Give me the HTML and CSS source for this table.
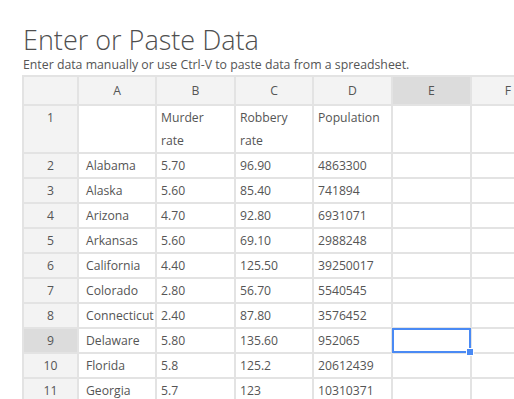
FILE: index.html
```html
<!DOCTYPE html>
<html lang="en">
  <head>
    <meta charset="UTF-8" />
    <meta name="viewport" content="width=device-width, initial-scale=1.0" />
    <title>Enter or Paste Data</title>
    <link rel="stylesheet" href="styles.css">
  </head>
  <body>
    <div id="page">
      <h1 class="title">Enter or Paste Data</h1>
      <p class="subtitle">Enter data manually or use Ctrl-V to paste data from a spreadsheet.</p>
      <div class="sheet-wrap">
        <table class="sheet">
          <colgroup>
            <col class="col-head" />
            <col class="col-a" />
            <col class="col-b" />
            <col class="col-c" />
            <col class="col-d" />
            <col class="col-e" />
            <col class="col-f" />
          </colgroup>
          <thead>
            <tr>
              <th></th>
              <th>A</th>
              <th>B</th>
              <th>C</th>
              <th>D</th>
              <th class="active">E</th>
              <th>F</th>
            </tr>
          </thead>
          <tbody>
            <tr class="tall">
              <th>1</th><td></td><td>Murder<br />rate</td><td>Robbery<br />rate</td><td>Population</td><td></td><td></td>
            </tr>
            <tr>
              <th>2</th><td>Alabama</td><td>5.70</td><td>96.90</td><td>4863300</td><td></td><td></td>
            </tr>
            <tr>
              <th>3</th><td>Alaska</td><td>5.60</td><td>85.40</td><td>741894</td><td></td><td></td>
            </tr>
            <tr>
              <th>4</th><td>Arizona</td><td>4.70</td><td>92.80</td><td>6931071</td><td></td><td></td>
            </tr>
            <tr>
              <th>5</th><td>Arkansas</td><td>5.60</td><td>69.10</td><td>2988248</td><td></td><td></td>
            </tr>
            <tr>
              <th>6</th><td>California</td><td>4.40</td><td>125.50</td><td>39250017</td><td></td><td></td>
            </tr>
            <tr>
              <th>7</th><td>Colorado</td><td>2.80</td><td>56.70</td><td>5540545</td><td></td><td></td>
            </tr>
            <tr>
              <th>8</th><td>Connecticut</td><td>2.40</td><td>87.80</td><td>3576452</td><td></td><td></td>
            </tr>
            <tr>
              <th class="active">9</th><td>Delaware</td><td>5.80</td><td>135.60</td><td>952065</td><td class="selected"></td><td></td>
            </tr>
            <tr>
              <th>10</th><td>Florida</td><td>5.8</td><td>125.2</td><td>20612439</td><td></td><td></td>
            </tr>
            <tr>
              <th>11</th><td>Georgia</td><td>5.7</td><td>123</td><td>10310371</td><td></td><td></td>
            </tr>
          </tbody>
        </table>
      </div>
    </div>
  </body>
</html>
```

FILE: styles.css
```css
* {
  box-sizing: border-box;
}

html,
body {
  margin: 0;
  overflow: hidden;
  background-color: #fff;
}

body {
  font-family: "Open Sans", "Liberation Sans", sans-serif;
  color: #555;
}

#page {
  padding: 23px 0 0 22px;
}

.title {
  margin: 0 0 0 1px;
  font-size: 27px;
  font-weight: 300;
  line-height: 34px;
  color: #4f4f4f;
}

.subtitle {
  margin: 0 0 2px 1px;
  font-size: 12.3px;
  line-height: 16px;
  color: #555;
  white-space: nowrap;
}

.sheet-wrap {
  overflow: hidden;
}

.sheet {
  border-collapse: collapse;
  table-layout: fixed;
  width: 522px;
  font-size: 12.2px;
}

.col-head {
  width: 55px;
}

.col-a,
.col-c {
  width: 78px;
}

.col-b,
.col-d,
.col-e {
  width: 79px;
}

.col-f {
  width: 74px;
}

.sheet th,
.sheet td {
  border: 2px solid #e3e3e3;
  height: 25px;
  line-height: 23px;
  padding: 0 4px;
  white-space: nowrap;
  vertical-align: top;
}

.sheet td:nth-child(2) {
  padding-left: 7px;
}

.sheet th {
  background-color: #f3f3f3;
  font-weight: normal;
  text-align: center;
}

.sheet thead th {
  height: 29px;
  line-height: 27px;
}

.sheet th.active {
  background-color: #dcdcdc;
}

.sheet tr.tall td,
.sheet tr.tall th {
  height: 47px;
}

.sheet td.selected {
  position: relative;
}

.sheet td.selected::after {
  content: "";
  position: absolute;
  left: -1px;
  top: -1px;
  right: -1px;
  bottom: -1px;
  border: 2px solid #4a8af4;
}

.sheet td.selected::before {
  content: "";
  position: absolute;
  right: -4px;
  bottom: -4px;
  width: 6px;
  height: 6px;
  background-color: #4a8af4;
  border: 1px solid #fff;
  z-index: 1;
}
```
